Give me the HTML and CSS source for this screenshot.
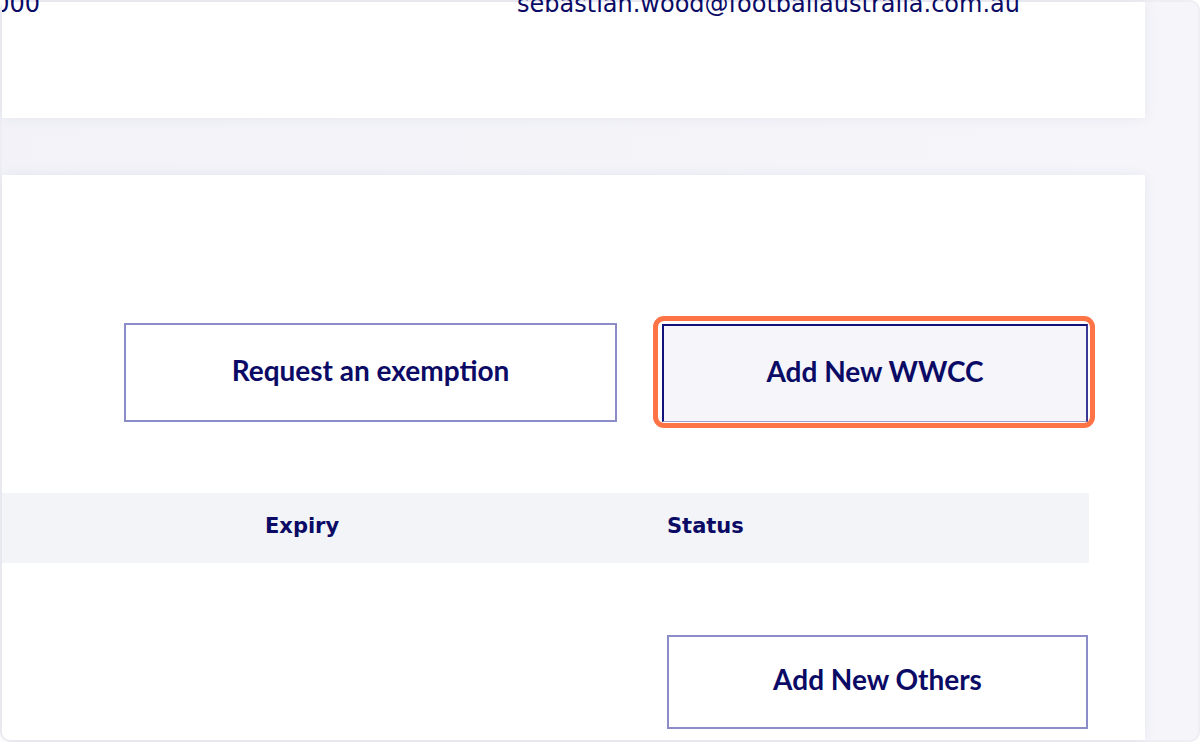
FILE: index.html
```html
<!DOCTYPE html>
<html lang="en">
<head>
<meta charset="utf-8">
<title>WWCC</title>
<link rel="stylesheet" href="styles.css">
</head>
<body>
<div class="frame">
  <main class="main">
    <section class="card card-top">
      <div class="contact-row">
        <span class="phone">0000</span>
        <span class="email">sebastian.wood@footballaustralia.com.au</span>
      </div>
    </section>
    <section class="card card-bottom">
      <div class="actions">
        <button class="btn btn-outline btn-exempt" type="button">Request an exemption</button>
        <div class="focus-wrap">
          <button class="btn btn-active" type="button">Add New WWCC</button>
          <span class="highlight"></span>
        </div>
      </div>
      <div class="table-head">
        <div class="th th-first"></div>
        <div class="th">Expiry</div>
        <div class="th">Status</div>
      </div>
      <div class="others-row">
        <button class="btn btn-outline btn-others" type="button">Add New Others</button>
      </div>
    </section>
  </main>
  <aside class="side"></aside>
</div>
</body>
</html>
```
FILE: styles.css
```css
* { box-sizing: border-box; }
html, body { margin: 0; padding: 0; background: #ffffff; }
body { font-family: "Lato", "Noto Sans", sans-serif; color: #0b0b66; }

.frame {
  width: 1200px;
  height: 742px;
  border: 2px solid #eeeef4;
  border-radius: 10px;
  background: linear-gradient(90deg, #f2f2f8 0%, #f5f5fa 100%);
  display: flex;
}

.main {
  width: 1143px;
  display: flex;
  flex-direction: column;
  gap: 57px;
}

.side { flex: 1; }

.card {
  background: #ffffff;
  box-shadow: 0 0 14px rgba(30, 30, 100, 0.06);
}

.card-top { height: 116px; }

.contact-row {
  margin-top: -10px;
  display: grid;
  grid-template-columns: 38px auto;
  column-gap: 477px;
  font-family: "DejaVu Sans", sans-serif;
  font-size: 24px;
  line-height: 24px;
  color: #0b0b66;
  white-space: nowrap;
}

.phone {
  direction: rtl;
  overflow: hidden;
  text-align: right;
}

.card-bottom {
  height: 565px;
  border-bottom-left-radius: 8px;
  padding-top: 148px;
}

.actions {
  display: flex;
  justify-content: flex-end;
  gap: 45px;
  padding-right: 57px;
}

.btn {
  font-family: "Lato", sans-serif;
  font-weight: 700;
  font-size: 28px;
  color: #0b0b66;
  background: #ffffff;
  cursor: pointer;
  padding: 0 0 6px 0;
}

.btn-outline { border: 2px solid #8c8cc8; }

.btn-exempt { width: 493px; height: 99px; }

.focus-wrap { position: relative; }

.btn-active {
  width: 426px;
  height: 98px;
  margin-top: 1px;
  background: #f5f5fa;
  border-top: 2px solid #12127a;
  border-left: 2px solid #12127a;
  border-right: 2px solid #3a3a94;
  border-bottom: 1px solid #9a9acf;
}

.highlight {
  position: absolute;
  top: -7px;
  left: -9px;
  right: -7px;
  bottom: -6px;
  border: 5px solid #fe7446;
  border-radius: 11px;
  pointer-events: none;
}

.table-head {
  margin-top: 71px;
  width: 1087px;
  height: 70px;
  padding-bottom: 4px;
  background: #f3f4f7;
  display: grid;
  grid-template-columns: 263px 402px 1fr;
  align-items: center;
  font-family: "DejaVu Sans", sans-serif;
  font-weight: 700;
  font-size: 21px;
  color: #0b0b66;
}

.others-row {
  margin-top: 72px;
  display: flex;
  justify-content: flex-end;
  padding-right: 57px;
}

.btn-others { width: 421px; height: 94px; }
```
